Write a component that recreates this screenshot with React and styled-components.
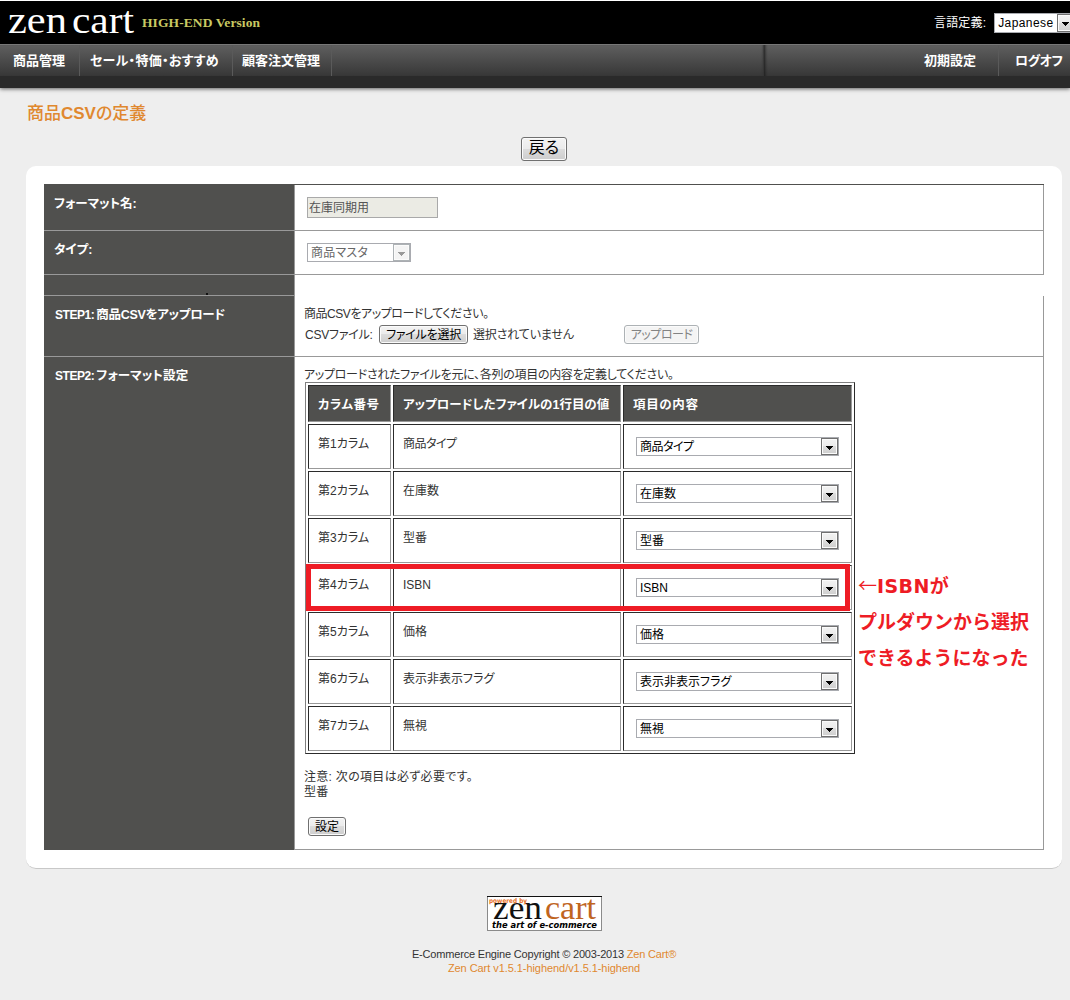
import styled, { createGlobalStyle } from 'styled-components';

const columns = [
  { value: '商品タイプ', tight: true },
  { value: '在庫数' },
  { value: '型番' },
  { value: 'ISBN' },
  { value: '価格' },
  { value: '表示非表示フラグ' },
  { value: '無視' },
];

function SelectBox({ children, ...rest }) {
  return (
    <StSelect {...rest}>
      <span>{children}</span>
      <i>
        <svg width="7" height="4" viewBox="0 0 7 4" shapeRendering="crispEdges">
          <path d="M0 0H7V1H6V2H5V3H4V4H3V3H2V2H1V1H0Z" fill="currentColor" />
        </svg>
      </i>
    </StSelect>
  );
}

function HeaderLogo() {
  return (
    <StHeaderLogo width="262" height="42" viewBox="0 0 262 42">
      <g fill="#fff" fontSize="37">
        <text x="8" y="31.5" textLength="59" lengthAdjust="spacingAndGlyphs">zen</text>
        <text x="72" y="31.5" textLength="62" lengthAdjust="spacingAndGlyphs">cart</text>
      </g>
      <text x="142" y="26" fill="#c9c963" fontSize="13.5" fontWeight="700" textLength="118">
        HIGH-END Version
      </text>
    </StHeaderLogo>
  );
}

function FooterLogo() {
  return (
    <StFooterLogo width="115" height="35" viewBox="0 0 115 35">
      <rect x="0.5" y="0.5" width="114" height="34" fill="#fff" stroke="#8a8a8a" />
      <path d="M0 0.5H115" stroke="#111" />
      <g fontFamily='"Liberation Serif", serif' fontSize="34">
        <text x="6" y="23" fill="#111" textLength="49" lengthAdjust="spacingAndGlyphs">zen</text>
        <text x="58" y="23" fill="#c0651f" textLength="51" lengthAdjust="spacingAndGlyphs">cart</text>
      </g>
      <g fontFamily='"DejaVu Sans", sans-serif' fontWeight="700">
        <text x="2" y="7" fill="#e8722a" fontSize="6.5" textLength="38" lengthAdjust="spacingAndGlyphs">
          powered by
        </text>
        <text
          x="5"
          y="32"
          fill="#000"
          fontSize="8.5"
          fontStyle="italic"
          textLength="105"
          lengthAdjust="spacingAndGlyphs"
        >
          the art of e-commerce
        </text>
      </g>
    </StFooterLogo>
  );
}

function Header() {
  return (
    <>
      <StTopBar>
        <HeaderLogo />
        <StLanguage>
          <label>言語定義:</label>
          <SelectBox $width={81} $height={20} $spacing={0.42}>Japanese</SelectBox>
        </StLanguage>
      </StTopBar>
      <StNav>
        <StMenu>
          <StMenuItem $width={80} $pad={13}>商品管理</StMenuItem>
          <StMenuItem $width={153} $pad={10} $spacing={0.3}>セール・特価・おすすめ</StMenuItem>
          <StMenuItem $width={99} $pad={9}>顧客注文管理</StMenuItem>
        </StMenu>
        <StMenu $right>
          <StMenuItem $width={87} $pad={12}>初期設定</StMenuItem>
          <StMenuItem $width={71} $pad={16} $spacing={-0.43} $last>ログオフ</StMenuItem>
        </StMenu>
      </StNav>
    </>
  );
}

function ColumnTable() {
  return (
    <StColumnTable>
      <StHeadCell $spacing={0.48}>カラム番号</StHeadCell>
      <StHeadCell>アップロードしたファイルの1行目の値</StHeadCell>
      <StHeadCell $spacing={0.67}>項目の内容</StHeadCell>
      {columns.map(({ value, tight }, i) => (
        <StColumnRow key={value}>
          <StCell>第{i + 1}カラム</StCell>
          <StCell $spacing={tight ? -0.5 : 0}>{value}</StCell>
          <StCell $field>
            <SelectBox $width={203} $spacing={tight ? -0.5 : 0}>{value}</SelectBox>
          </StCell>
        </StColumnRow>
      ))}
      <StHighlight />
      <StNote>
        <p>
          <span>←</span>
          <b>ISBN</b>が
        </p>
        <p>プルダウンから選択</p>
        <p>できるようになった</p>
      </StNote>
    </StColumnTable>
  );
}

function App() {
  return (
    <StPage>
      <GlobalStyle />
      <Header />
      <StMain>
        <StTitle>
          商品<b>CSV</b>の定義
        </StTitle>
        <StButton $large>戻る</StButton>
        <StPanel>
          <StFormRow $height={47} $first>
            <StLabel>フォーマット名:</StLabel>
            <StField $inset>
              <StInput>在庫同期用</StInput>
            </StField>
          </StFormRow>
          <StFormRow $height={44}>
            <StLabel>タイプ:</StLabel>
            <StField $inset>
              <SelectBox $width={104} $spacing={0.2} $disabled>商品マスタ</SelectBox>
            </StField>
          </StFormRow>
          <StFormRow $height={21} $blank>
            <StLabel>
              <StDot />
            </StLabel>
            <StField />
          </StFormRow>
          <StFormRow $height={61}>
            <StLabel>
              <StStep>STEP1:</StStep>
              <StStepName $spacing={-0.3}>商品CSVをアップロード</StStepName>
            </StLabel>
            <StField>
              <StText $spacing={-0.46}>商品CSVをアップロードしてください。</StText>
              <StUpload>
                <StText $spacing={-0.23}>CSVファイル:</StText>
                <StButton $width={89} $spacing={-0.25}>ファイルを選択</StButton>
                <StText $spacing={-0.15}>選択されていません</StText>
                <StButton $width={75} $spacing={-0.5} $disabled>アップロード</StButton>
              </StUpload>
            </StField>
          </StFormRow>
          <StFormRow $height={493}>
            <StLabel>
              <StStep>STEP2:</StStep>
              <StStepName $spacing={0.1}>フォーマット設定</StStepName>
            </StLabel>
            <StField>
              <StLead>アップロードされたファイルを元に、各列の項目の内容を定義してください。</StLead>
              <ColumnTable />
              <StRemarks>
                注意: 次の項目は必ず必要です。
                <br />
                型番
              </StRemarks>
              <StButton $width={38}>設定</StButton>
            </StField>
          </StFormRow>
        </StPanel>
        <StFooter>
          <FooterLogo />
          <StFooterLine $spacing={-0.18}>
            E-Commerce Engine Copyright © 2003-2013 <a>Zen Cart®</a>
          </StFooterLine>
          <StFooterLine $spacing={-0.06}>
            <a>Zen Cart v1.5.1-highend/v1.5.1-highend</a>
          </StFooterLine>
        </StFooter>
      </StMain>
    </StPage>
  );
}

export default App;

const GlobalStyle = createGlobalStyle`
  * {
    box-sizing: border-box;
  }
  body {
    margin: 0;
    background: #eee;
    overflow: hidden;
  }
  p {
    margin: 0;
  }
`;

const StPage = styled.div`
  width: 1070px;
  height: 1000px;
  overflow: hidden;
  border-top: 1px solid #fff;
  background: #eee;
  color: #333;
  font-family: "Liberation Sans", "Noto Sans CJK JP", sans-serif;
  font-size: 12px;
  font-feature-settings: "palt";
  white-space: nowrap;
`;

const StTopBar = styled.header`
  display: flex;
  justify-content: space-between;
  height: 43px;
  background: #000;
`;

const StHeaderLogo = styled.svg`
  font-family: "Liberation Serif", serif;
`;

const StLanguage = styled.div`
  display: flex;
  gap: 8px;
  width: 136px;
  padding-top: 12px;
  color: #fff;
  line-height: 20px;
  label {
    flex: none;
    letter-spacing: 0.16px;
  }
`;

const StNav = styled.nav`
  display: flex;
  position: relative;
  height: 44px;
  border-top: 1px solid #777;
  border-bottom: 12px solid #2a2a2a;
  background: linear-gradient(#5f5f5f, #373737);
  box-shadow: 0 1px 4px rgba(0, 0, 0, 0.6);
`;

const StMenu = styled.div`
  display: flex;
  justify-content: ${(p) => (p.$right ? 'flex-end' : 'flex-start')};
  width: ${(p) => (p.$right ? 306 : 764)}px;
  box-shadow: ${(p) => (p.$right ? 'inset 3px 0 3px -2px #1c1c1c' : 'inset -2px 0 2px -1px #333')};
`;

const StMenuItem = styled.div`
  width: ${(p) => p.$width}px;
  padding-left: ${(p) => p.$pad}px;
  border-right: ${(p) => (p.$last ? 'none' : '1px solid #5a5a5a')};
  color: #fff;
  font-size: 13px;
  font-weight: 700;
  line-height: 32px;
  letter-spacing: ${(p) => p.$spacing || 0}px;
`;

const StMain = styled.main`
  display: flex;
  flex-direction: column;
  align-items: center;
  padding: 16px 8px 0 26px;
`;

const StTitle = styled.h1`
  align-self: flex-start;
  margin: 0 0 13px 1px;
  color: #e0882f;
  font-size: 17px;
  font-weight: 500;
  line-height: 20px;
`;

const StButton = styled.button`
  display: block;
  flex: none;
  width: ${(p) => (p.$large ? 46 : p.$width)}px;
  height: ${(p) => (p.$large ? 24 : 19)}px;
  padding: ${(p) => (p.$large ? '0 0 3px' : '1px 0 0')};
  border: 1px solid ${(p) => (p.$disabled ? '#adb2b5' : '#707070')};
  border-radius: 3px;
  background: ${(p) =>
    p.$disabled ? '#f4f4f4' : 'linear-gradient(#f3f3f3, #ebebeb 49%, #dcdcdc 50%, #cdcdcd)'};
  box-shadow: inset 0 0 0 1px #fbfbfb;
  color: ${(p) => (p.$disabled ? '#838383' : '#000')};
  font-family: inherit;
  font-size: ${(p) => (p.$large ? 16 : 12)}px;
  font-feature-settings: inherit;
  line-height: ${(p) => (p.$large ? 19 : 16)}px;
  letter-spacing: ${(p) => p.$spacing || 0}px;
`;

const StPanel = styled.section`
  width: 100%;
  height: 703px;
  margin-top: 5px;
  padding: 18px;
  border-bottom: 1px solid #c8c8c8;
  border-radius: 10px;
  background: #fff;
`;

const StLabel = styled.div`
  padding: 9px 0 0 10px;
  border-bottom: 1px solid #999;
  background: #50504e;
  color: #fff;
  font-size: 12.5px;
  font-weight: 700;
  line-height: 20px;
`;

const StField = styled.div`
  padding: ${(p) => (p.$inset ? '12px 0 0 12px' : '8px 0 0 9px')};
  border: solid #999;
  border-width: 0 1px 1px;
  line-height: 20px;
`;

const StFormRow = styled.div`
  display: grid;
  grid-template-columns: 250px 750px;
  height: ${(p) => p.$height}px;
  border-top: ${(p) => (p.$first ? '1px solid #50504e' : 'none')};
  ${StField} {
    ${(p) => p.$blank && 'border-width: 0 0 0 1px;'}
  }
  &:last-child ${StLabel} {
    border-bottom-color: #50504e;
  }
`;

const StDot = styled.div`
  width: 2px;
  height: 2px;
  margin: 9px 0 0 152px;
  background: #111;
`;

const StStep = styled.span`
  margin: 0 2px 0 1px;
  font-size: 12px;
  letter-spacing: -0.45px;
`;

const StStepName = styled.span`
  letter-spacing: ${(p) => p.$spacing || 0}px;
`;

const StInput = styled.div`
  width: 131px;
  height: 21px;
  padding-left: 1px;
  border: 1px solid #a9a9a9;
  background: #ebebe4;
  color: #545454;
`;

const StSelect = styled.div`
  display: flex;
  flex: none;
  justify-content: space-between;
  width: ${(p) => p.$width}px;
  height: ${(p) => p.$height || 19}px;
  padding-left: 3px;
  border: 1px solid #a9abb0;
  background: #fff;
  color: ${(p) => (p.$disabled ? '#666' : '#000')};
  line-height: ${(p) => (p.$height || 19) - 1}px;
  letter-spacing: ${(p) => p.$spacing || 0}px;
  i {
    display: flex;
    align-items: center;
    justify-content: center;
    width: 17px;
    border: 1px solid ${(p) => (p.$disabled ? '#adb2b5' : '#707070')};
    background: ${(p) =>
      p.$disabled ? '#f4f4f4' : 'linear-gradient(#f2f2f2, #ebebeb 49%, #dcdcdc 50%, #cfcfcf)'};
    box-shadow: inset 0 0 0 1px #fbfbfb;
    color: ${(p) => (p.$disabled ? '#999' : '#000')};
  }
  svg {
    margin-top: 2px;
  }
`;

const StText = styled.span`
  letter-spacing: ${(p) => p.$spacing || 0}px;
`;

const StUpload = styled.div`
  display: flex;
  align-items: center;
  ${StText} {
    padding-top: 1px;
  }
  ${StText}:first-child {
    width: 75px;
    padding-left: 1px;
  }
  ${StButton} + ${StText} {
    width: 156px;
    padding-left: 5px;
  }
  ${StButton} {
    margin-bottom: 1px;
  }
`;

const StLead = styled.p`
  padding-top: 3px;
  line-height: 14px;
  letter-spacing: -0.29px;
`;

const StColumnTable = styled.div`
  display: grid;
  position: relative;
  grid-template-columns: 83px 228px 229px;
  gap: 2px;
  width: 550px;
  margin-left: 1px;
  padding: 2px;
  border: 1px solid;
  border-color: #808080 #2b2b2b #2b2b2b #808080;
`;

const StColumnRow = styled.div`
  display: grid;
  grid-column: 1 / -1;
  grid-template-columns: subgrid;
`;

const StCell = styled.div`
  height: 45px;
  padding: ${(p) => (p.$field ? '12px 0 0 12px' : '9px 0 0 9px')};
  border: 1px solid;
  border-color: #2b2b2b #999 #999 #2b2b2b;
  letter-spacing: ${(p) => p.$spacing || 0}px;
`;

const StHeadCell = styled(StCell)`
  height: 37px;
  background: #50504e;
  color: #fff;
  font-size: 12.5px;
  font-weight: 700;
`;

const StHighlight = styled.div`
  position: absolute;
  top: 181px;
  left: 0;
  width: 544px;
  height: 47px;
  border: 5px solid #ee1c25;
`;

const StNote = styled.div`
  position: absolute;
  top: 184px;
  left: 552px;
  color: #ee1c25;
  font-size: 19px;
  font-weight: 700;
  font-feature-settings: normal;
  line-height: 36px;
  span {
    font-family: "Noto Sans CJK JP", sans-serif;
    font-weight: 400;
  }
  b {
    font-family: "DejaVu Sans", sans-serif;
    letter-spacing: 0.4px;
  }
`;

const StRemarks = styled.p`
  margin: 16px 0 17px;
  line-height: 15px;
  letter-spacing: 0.3px;
  & + ${StButton} {
    margin-left: 4px;
  }
`;

const StFooter = styled.footer`
  display: flex;
  flex-direction: column;
  align-items: center;
  margin-top: 27px;
  font-size: 11px;
  line-height: 14px;
  a {
    color: #e0882f;
  }
`;

const StFooterLine = styled.p`
  letter-spacing: ${(p) => p.$spacing}px;
`;

const StFooterLogo = styled.svg`
  margin-bottom: 16px;
`;
